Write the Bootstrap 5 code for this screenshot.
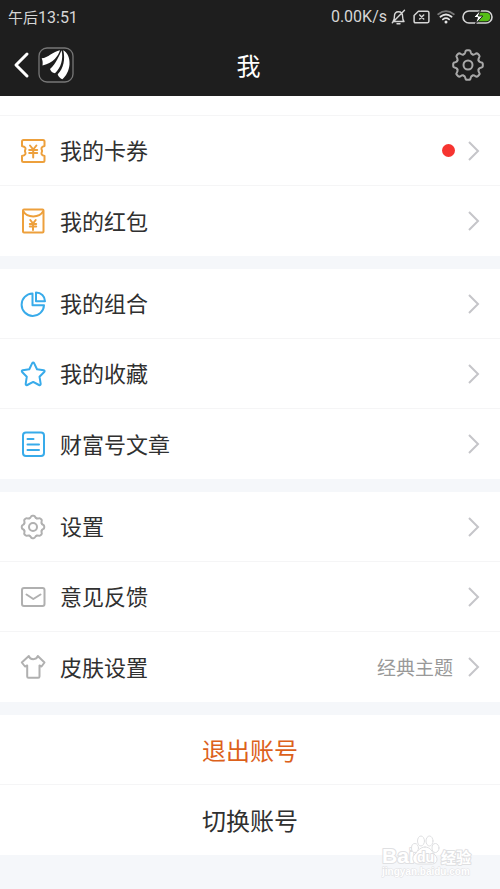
<!DOCTYPE html>
<html lang="zh-CN">
<head>
<meta charset="utf-8">
<meta name="viewport" content="width=device-width, initial-scale=1">
<title>我</title>
<link href="https://cdn.jsdelivr.net/npm/bootstrap@5.3.0/dist/css/bootstrap.min.css" rel="stylesheet">
<style>
  body { background: #f5f7fa; color: #303030; font-family: "Noto Sans CJK SC", sans-serif; }
  svg { display: block; flex: none; fill: none; stroke-linecap: round; stroke-linejoin: round; }
  .top-area { background: #1e1e1e; color: #fff; }
  .status-line { height: 34px; padding: 0 7px 0 8px; font-size: 15px; line-height: 34px; color: #d6d6d6; }
  .latin { font-family: Roboto, sans-serif; font-size: 16px; }
  .status-icons { gap: 7px; }
  .title-bar { height: 62px; padding: 0 15px 0 12px; }
  .side { flex: 1 1 0; }
  .title-bar h1 { font-size: 24px; line-height: 32px; font-weight: 400; }
  .plain-btn { background: none; border: 0; padding: 0; }
  .group { --bs-list-group-border-color: #f5f5f6; --bs-list-group-color: #303030; --bs-list-group-action-color: #303030; margin-bottom: 13px; }
  .spacer-row { height: 20px; background: #fff; border-bottom: 1px solid #f5f5f6; }
  .entry { height: 70px; padding: 0 20px; font-size: 22px; line-height: 32px; }
  .entry .label { margin-left: 14px; padding-bottom: 3px; }
  .entry .value { font-size: 19px; color: #999; margin-right: 14px; }
  .dot { width: 13px; height: 13px; border-radius: 50%; background: #f63430; margin-right: 12px; }
  .account { height: 70px; font-size: 24px; line-height: 32px; }
  .account.logout { color: #dc611b; }
  .orange { stroke: #eda03c; stroke-width: 2; }
  .blue { stroke: #38abea; stroke-width: 2; }
  .grey { stroke: #b0b0b0; stroke-width: 2; }
  .arrow { stroke: #c5c5c9; stroke-width: 2; stroke-linecap: butt; stroke-linejoin: miter; }
  .watermark { right: 25px; bottom: 7px; pointer-events: none; }
  .watermark text { fill: #fff; stroke: #dfe0e2; stroke-width: 2; paint-order: stroke; font-family: "Liberation Sans", "Noto Sans CJK SC", sans-serif; font-weight: 700; }
  .watermark .site { stroke-width: 1; }
</style>
<script src="https://cdn.jsdelivr.net/npm/bootstrap@5.3.0/dist/js/bootstrap.bundle.min.js" defer></script>
</head>
<body class="position-relative min-vh-100">
<svg width="0" height="0" class="position-absolute" aria-hidden="true">
  <defs>
    <path id="tooth" d="M-4.4-10.6Q-3-11.1-2.7-12.8Q-2.4-14.8-1-14.8H1Q2.4-14.8 2.7-12.8Q3-11.1 4.4-10.6"/>
    <path id="bump" d="M-3.6-8.7Q-2.6-9-2.2-10Q-1.7-11.2-.7-11.2H.7Q1.7-11.2 2.2-10Q2.6-9 3.6-8.7"/>
    <path id="chevron" d="M2 1 11 10 2 19"/>
  </defs>
</svg>

<header class="top-area">
  <div class="status-line d-flex justify-content-between align-items-center">
    <span>午后<span class="latin">13:51</span></span>
    <div class="status-icons d-flex align-items-center">
      <div class="d-flex align-items-center"><span class="latin">0.00K/s</span>
      <svg class="ms-1" width="15" height="16" viewBox="0 0 15 16" stroke="#d6d6d6" stroke-width="1.4" role="img" aria-label="静音"><path d="M2 12.5C3.5 11 3.400 9.500 3.400 7.500C3.400 4.500 5 2.700 7.500 2.700S11.600 4.500 11.600 7.500C11.600 9.500 11.600 11 13 12.500ZM6 14.700H9M13.500 1.300 1.300 13.800"/></svg></div>
      <svg width="17" height="14" viewBox="0 0 17 14" stroke="#d6d6d6" stroke-width="1.500" role="img" aria-label="无SIM卡"><path d="M5.500 1.300H14.500Q15.900 1.300 15.900 2.700V11.300Q15.900 12.700 14.500 12.700H2.500Q1.100 12.700 1.100 11.300V5.500ZM6.700 5 10.700 9M10.700 5 6.700 9"/></svg>
      <svg width="18" height="14" viewBox="0 0 18 14" stroke-width="1.800" role="img" aria-label="WLAN"><path stroke="#777" d="M1.200 4.300Q9-2 16.800 4.300"/><path stroke="#e4e4e4" d="M3.400 6.800Q9 2.200 14.600 6.800M5.900 9.400Q9 6.900 12.100 9.400"/><circle cx="9" cy="12" r="1.500" fill="#e4e4e4"/></svg>
      <svg width="31" height="14" viewBox="0 0 31 14" role="img" aria-label="充电中"><rect x="1" y="1" width="29" height="12" rx="6" stroke="#d6d6d6" stroke-width="1.600"/><path fill="#55bd16" d="M18 2.800H24Q28.200 2.800 28.200 7T24 11.200H15Z"/><path fill="#fff" stroke="#1e1e1e" stroke-width="1" d="M18.500 0 11.500 7.500H15.500L13.500 14 20.800 6H16.800Z"/></svg>
    </div>
  </div>
  <div class="title-bar d-flex align-items-center">
    <div class="side d-flex align-items-center">
      <button type="button" class="plain-btn" aria-label="返回"><svg width="18" height="28" viewBox="0 0 18 28" stroke="#fff" stroke-width="3" stroke-linecap="butt"><path d="M15 3 4 14 15 25"/></svg></button>
      <a href="#" class="ms-2" aria-label="首页"><svg width="36" height="36" viewBox="0 0 36 36"><rect x="1" y="1" width="34" height="34" rx="8" stroke="#777" stroke-width="1.300"/><g fill="#fff"><path d="M3.700 11.300C10 10.800 15 4.500 22 3.200C20 9 16 15.500 4.500 18.600C4.900 16 4.700 13.500 3.700 11.300Z"/><path d="M23.600 3.300C21 9 18 17 12 22C12.700 24.200 14.600 26.200 17 26.200C23 21 25.500 12 23.600 3.300Z"/><path d="M25.200 3.300C29.500 5.500 32 11 31.500 17.500C31 24 28 29 24.300 32.300C22.300 31.500 20.300 29.500 19.700 27.200C25.500 22 27.500 12 25.200 3.300Z"/></g></svg></a>
    </div>
    <h1 class="m-0">我</h1>
    <div class="side d-flex justify-content-end">
      <button type="button" class="plain-btn" aria-label="设置"><svg width="34" height="34" viewBox="-17 -17 34 34" stroke="#a8a8a8" stroke-width="2"><circle r="4.500"/><use href="#tooth"/><use href="#tooth" transform="rotate(45)"/><use href="#tooth" transform="rotate(90)"/><use href="#tooth" transform="rotate(135)"/><use href="#tooth" transform="rotate(180)"/><use href="#tooth" transform="rotate(225)"/><use href="#tooth" transform="rotate(270)"/><use href="#tooth" transform="rotate(315)"/></svg></button>
    </div>
  </div>
</header>

<main>
  <div class="spacer-row"></div>
  <nav class="group list-group list-group-flush">
    <a href="#" class="entry list-group-item list-group-item-action d-flex align-items-center">
      <svg class="orange" width="26" height="26" viewBox="0 0 26 26"><path d="M3.500 2H23Q24.500 2 24.500 3.500V8C21 9 21 10.500 22 12.500V13.500C21 15.500 21 17 24.500 18V22.500Q24.500 24 23 24H3.500Q2 24 2 22.500V18C6 17 6 15.500 5 13.500V12.500C6 10.500 6 9 2 8V3.500Q2 2 3.500 2Z"/><path d="M10 7.500 13.200 11.500 16.400 7.500M9.200 12H17.200M9.200 15H17.200M13.200 12V19.500"/></svg>
      <span class="label">我的卡券</span><span class="dot ms-auto" role="img" aria-label="新消息"></span>
      <svg class="arrow" width="13" height="20" viewBox="0 0 13 20"><use href="#chevron"/></svg></a>
    <a href="#" class="entry list-group-item list-group-item-action d-flex align-items-center">
      <svg class="orange" width="26" height="26" viewBox="0 0 26 26"><rect x="3" y="1.500" width="20.500" height="23" rx="1"/><path d="M3.500 3.500C7 10 19.500 10 23 3.500"/><path d="M10.300 12 13 15.500 15.700 12M9.800 16H16.200M9.800 18.500H16.200M13 16V22"/></svg>
      <span class="label">我的红包</span>
      <svg class="arrow ms-auto" width="13" height="20" viewBox="0 0 13 20"><use href="#chevron"/></svg></a>
  </nav>

  <nav class="group list-group list-group-flush">
    <a href="#" class="entry list-group-item list-group-item-action d-flex align-items-center">
      <svg class="blue" width="26" height="26" viewBox="0 0 26 26"><path d="M12.500 2.500A11.200 11.200 0 1 0 24 14.200H12.500ZM16 1.500V10.200H25C25 5 21 1.500 16 1.500Z"/></svg>
      <span class="label">我的组合</span>
      <svg class="arrow ms-auto" width="13" height="20" viewBox="0 0 13 20"><use href="#chevron"/></svg></a>
    <a href="#" class="entry list-group-item list-group-item-action d-flex align-items-center">
      <svg class="blue" width="26" height="26" viewBox="0 0 26 26"><path d="M12.100 2.400Q13.200 .8 14.200 2.400L17 8.300 23.700 9.300Q25.300 9.700 24.200 11L19.500 15.700 20.700 22.800Q20.700 24.700 19 24L13.200 20.900 7.300 24Q5.600 24.600 5.700 22.800L6.800 15.700 2.100 11Q1.200 9.700 2.700 9.300L9.300 8.300Z"/></svg>
      <span class="label">我的收藏</span>
      <svg class="arrow ms-auto" width="13" height="20" viewBox="0 0 13 20"><use href="#chevron"/></svg></a>
    <a href="#" class="entry list-group-item list-group-item-action d-flex align-items-center">
      <svg class="blue" width="26" height="26" viewBox="0 0 26 26"><rect x="3" y="1.500" width="21" height="23.500" rx="3"/><path d="M7.500 8H13.500M7.500 13.500H19M7.500 19H19"/></svg>
      <span class="label">财富号文章</span>
      <svg class="arrow ms-auto" width="13" height="20" viewBox="0 0 13 20"><use href="#chevron"/></svg></a>
  </nav>

  <nav class="group list-group list-group-flush">
    <a href="#" class="entry list-group-item list-group-item-action d-flex align-items-center">
      <svg class="grey" width="26" height="26" viewBox="-13 -13 26 26"><circle r="4"/><use href="#bump"/><use href="#bump" transform="rotate(45)"/><use href="#bump" transform="rotate(90)"/><use href="#bump" transform="rotate(135)"/><use href="#bump" transform="rotate(180)"/><use href="#bump" transform="rotate(225)"/><use href="#bump" transform="rotate(270)"/><use href="#bump" transform="rotate(315)"/></svg>
      <span class="label">设置</span>
      <svg class="arrow ms-auto" width="13" height="20" viewBox="0 0 13 20"><use href="#chevron"/></svg></a>
    <a href="#" class="entry list-group-item list-group-item-action d-flex align-items-center">
      <svg class="grey" width="26" height="26" viewBox="0 0 26 26"><rect x="2" y="4" width="22.500" height="18" rx="2"/><path d="M6.500 10.500 13.300 15 20.500 10.500"/></svg>
      <span class="label">意见反馈</span>
      <svg class="arrow ms-auto" width="13" height="20" viewBox="0 0 13 20"><use href="#chevron"/></svg></a>
    <a href="#" class="entry list-group-item list-group-item-action d-flex align-items-center">
      <svg class="grey" width="26" height="26" viewBox="0 0 26 26"><path d="M8.800 2C10 6.200 16.500 6.200 17.800 2L24.500 8.500 21.500 12.500 19.500 11.500V22.500Q19.500 23.800 18.200 23.800H8.500Q7.200 23.800 7.200 22.500V11.500L5 12.500 1.800 8.500Z"/></svg>
      <span class="label">皮肤设置</span><span class="value ms-auto">经典主题</span>
      <svg class="arrow" width="13" height="20" viewBox="0 0 13 20"><use href="#chevron"/></svg></a>
  </nav>

  <div class="group list-group list-group-flush mb-0">
    <button type="button" class="account logout list-group-item list-group-item-action text-center">退出账号</button>
    <button type="button" class="account list-group-item list-group-item-action text-center">切换账号</button>
  </div>
</main>

<svg class="watermark position-absolute" width="94" height="48" viewBox="0 0 94 48" role="img" aria-label="Baidu经验">
  <text x="1" y="29" font-size="21">Bai</text>
  <g fill="#fff" stroke="#dfe0e2" stroke-width="1"><path d="M44 13C38 13 36 19 33 21C30 25 33 31 39 30H49C56 31 58 25 54 21C51 18 50 13 44 13Z"/><ellipse cx="34" cy="14" rx="3.500" ry="4.500"/><ellipse cx="40" cy="7" rx="3.500" ry="5"/><ellipse cx="48.500" cy="7" rx="3.500" ry="5"/><ellipse cx="54.500" cy="14" rx="3.500" ry="4.500"/></g>
  <text x="36" y="28" font-size="14">du</text>
  <text x="60" y="29" font-size="15">经验</text>
  <text class="site" x="1" y="41" font-size="10">jingyan.baidu.com</text>
</svg>
</body>
</html>
